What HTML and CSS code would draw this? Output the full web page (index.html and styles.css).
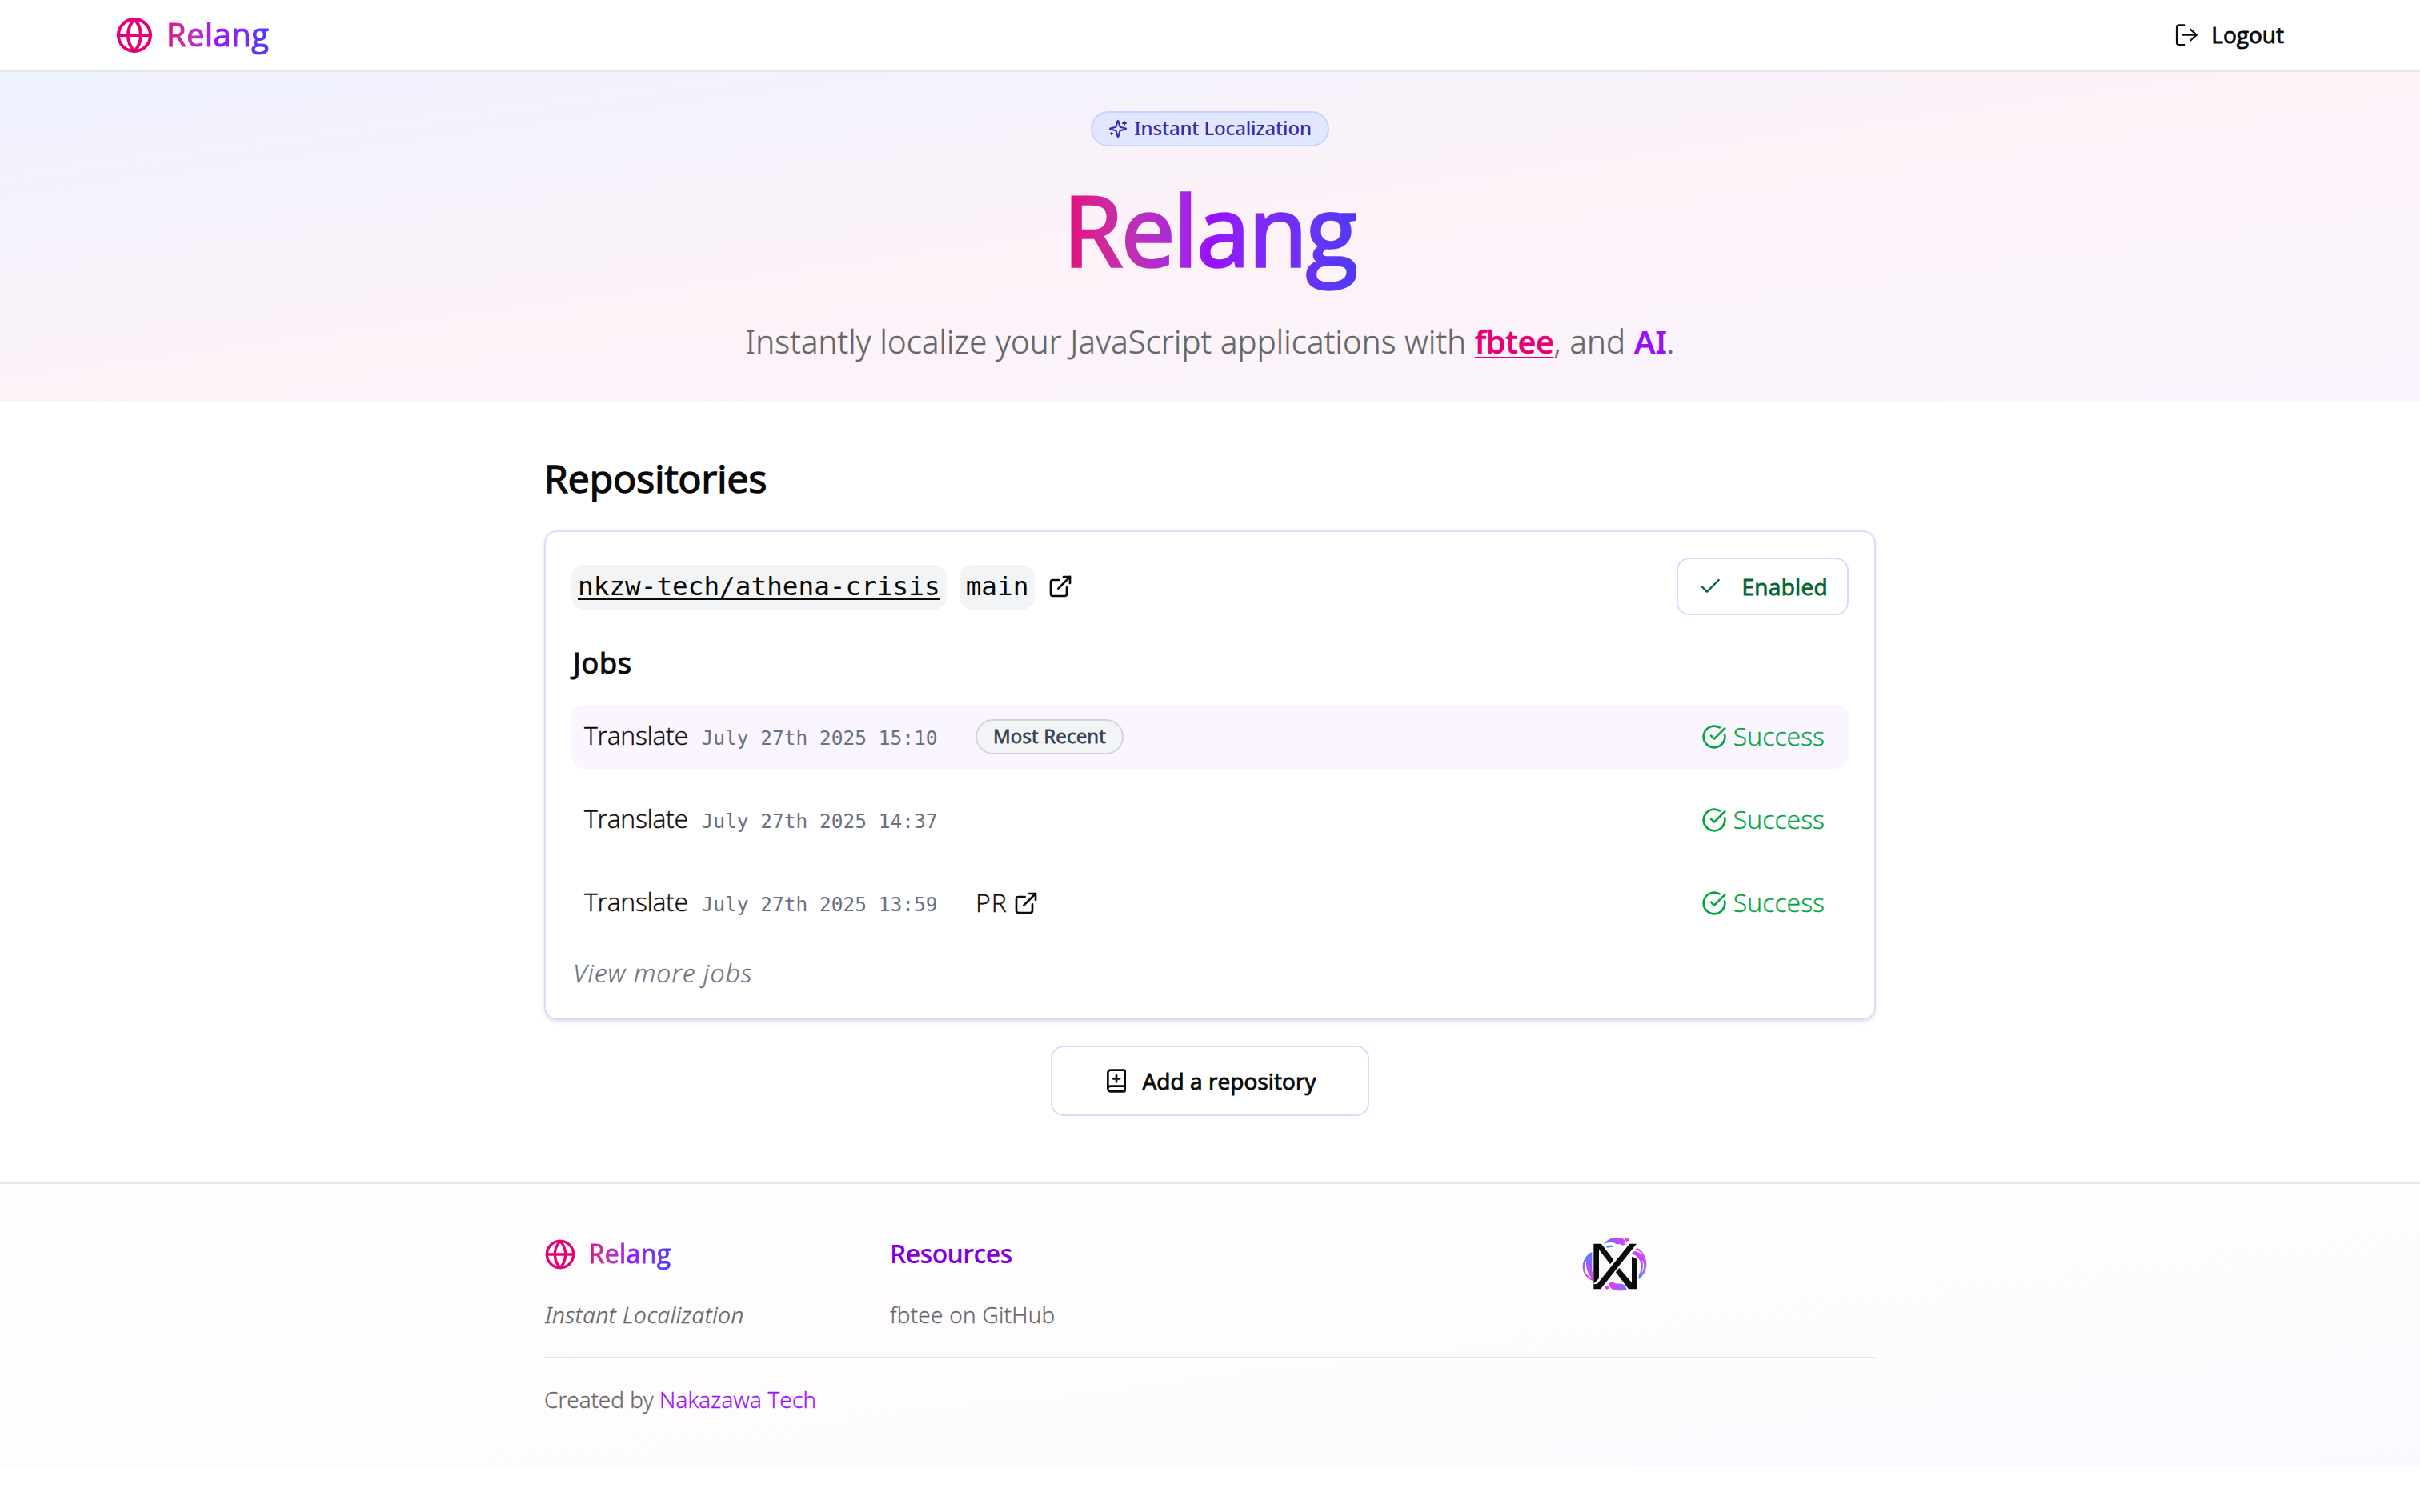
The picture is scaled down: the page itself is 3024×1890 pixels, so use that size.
FILE: index.html
```
<!DOCTYPE html>
<html lang="en">
<head>
<meta charset="utf-8">
<title>Relang</title>
<link rel="stylesheet" href="styles.css">
</head>
<body>
<svg class="defs" width="0" height="0" aria-hidden="true">
  <symbol id="globe" viewBox="0 0 24 24"><circle cx="12" cy="12" r="10"/><path d="M12 2a14.5 14.5 0 0 0 0 20 14.5 14.5 0 0 0 0-20"/><path d="M2 12h20"/></symbol>
  <symbol id="external" viewBox="0 0 24 24"><path d="M15 3h6v6"/><path d="M10 14 21 3"/><path d="M18 13v6a2 2 0 0 1-2 2H5a2 2 0 0 1-2-2V8a2 2 0 0 1 2-2h6"/></symbol>
  <symbol id="done" viewBox="0 0 24 24"><path d="M21.801 10A10 10 0 1 1 17 3.335"/><path d="m9 11 3 3L22 4"/></symbol>
</svg>

<header class="topbar">
  <a class="brand"><svg class="icon brand-icon"><use href="#globe"/></svg><span class="brand-name gradient-text">Relang</span></a>
  <a class="logout">
    <svg class="icon logout-icon" viewBox="114 88 88 88"><path d="M148 95h-20a8 8 0 0 0-8 8v58a8 8 0 0 0 8 8h20"/><path d="M142 132h52"/><path d="m171 111 23 21-23 21"/></svg>
    <span class="medium">Logout</span>
  </a>
</header>

<section class="hero">
  <div class="pill">
    <svg class="icon pill-icon" viewBox="0 0 24 24"><path d="M9.937 15.5A2 2 0 0 0 8.5 14.063l-6.135-1.582a.5.5 0 0 1 0-.962L8.5 9.936A2 2 0 0 0 9.937 8.5l1.582-6.135a.5.5 0 0 1 .963 0L14.063 8.5A2 2 0 0 0 15.5 9.937l6.135 1.581a.5.5 0 0 1 0 .964L15.5 14.063a2 2 0 0 0-1.437 1.437l-1.582 6.135a.5.5 0 0 1-.963 0z"/><path d="M20 3v4"/><path d="M22 5h-4"/><path d="M4 17v2"/><path d="M5 18H3"/></svg>
    <span>Instant Localization</span>
  </div>
  <h1 class="hero-title gradient-text">Relang</h1>
  <p class="tagline">Instantly localize your JavaScript applications with <a class="tag-link">fbtee</a>, and <span class="tag-ai">AI</span>.</p>
</section>

<main class="content">
  <h2 class="section-title medium">Repositories</h2>
  <article class="card">
    <div class="card-head">
      <code class="code linked">nkzw-tech/athena-crisis</code>
      <code class="code">main</code>
      <svg class="icon"><use href="#external"/></svg>
      <button class="enabled"><svg class="icon check" viewBox="0 0 24 24"><path d="M20 6 9 17l-5-5"/></svg><span class="medium">Enabled</span></button>
    </div>
    <h3 class="jobs-title medium">Jobs</h3>
    <ul class="jobs">
      <li class="job recent">
        <div class="job-info"><span class="job-name">Translate</span><time class="job-time">July 27th 2025 15:10</time></div>
        <span class="tag medium">Most Recent</span>
        <span class="status"><svg class="icon"><use href="#done"/></svg><span>Success</span></span>
      </li>
      <li class="job">
        <div class="job-info"><span class="job-name">Translate</span><time class="job-time">July 27th 2025 14:37</time></div>
        <span class="status"><svg class="icon"><use href="#done"/></svg><span>Success</span></span>
      </li>
      <li class="job">
        <div class="job-info"><span class="job-name">Translate</span><time class="job-time">July 27th 2025 13:59</time></div>
        <a class="pr"><span>PR</span><svg class="icon"><use href="#external"/></svg></a>
        <span class="status"><svg class="icon"><use href="#done"/></svg><span>Success</span></span>
      </li>
    </ul>
    <a class="more">View more jobs</a>
  </article>
  <button class="add">
    <svg class="icon" viewBox="0 0 24 24"><path d="M4 19.5v-15A2.5 2.5 0 0 1 6.5 2H19a1 1 0 0 1 1 1v18a1 1 0 0 1-1 1H6.5a1 1 0 0 1 0-5H20"/><path d="M12 7v6"/><path d="M9 10h6"/></svg>
    <span class="medium">Add a repository</span>
  </button>
</main>

<footer class="footer">
  <div class="footer-inner">
    <div class="footer-grid">
      <div class="footer-col">
        <a class="footer-brand"><svg class="icon footer-icon"><use href="#globe"/></svg><span class="footer-name gradient-text">Relang</span></a>
        <p class="motto">Instant Localization</p>
      </div>
      <div class="footer-col">
        <h4 class="footer-title">Resources</h4>
        <a class="footer-link">fbtee on GitHub</a>
      </div>
      <svg class="logo" viewBox="50 34 246 204">
        <defs>
          <linearGradient id="ga" x1="0" y1="0" x2="1" y2="0"><stop offset="0" stop-color="#4f86ff"/><stop offset=".55" stop-color="#a855f7"/><stop offset="1" stop-color="#d946ef"/></linearGradient>
          <linearGradient id="gb" x1="0" y1="0" x2="0" y2="1"><stop offset="0" stop-color="#4f86ff"/><stop offset=".5" stop-color="#a855f7"/><stop offset="1" stop-color="#d946ef"/></linearGradient>
          <linearGradient id="gc" x1="0" y1="0" x2="0" y2="1"><stop offset="0" stop-color="#d946ef"/><stop offset=".5" stop-color="#b455fa"/><stop offset="1" stop-color="#4f86ff"/></linearGradient>
          <linearGradient id="gd" x1="0" y1="0" x2="1" y2="0"><stop offset="0" stop-color="#e040f0"/><stop offset=".5" stop-color="#b455fa"/><stop offset="1" stop-color="#5f80ff"/></linearGradient>
        </defs>
        <path fill="url(#ga)" d="M130 62c14-19 40-30 64-24 10 2 16 7 18 13 1 8-3 15-10 15-7-1-9-6-14-5-6 2-12 0-16-4-13-4-28-2-42 5z"/>
        <path fill="#d946ef" d="M208 43c6-5 14-4 19-1-2 5-5 10-11 11-2-4-4-8-8-10z"/>
        <path fill="#5f80ff" d="M139 73c7-9 21-10 29-3-4 5-8 2-13 3-6 3-11 3-16 0z"/>
        <path fill="url(#gb)" fill-rule="evenodd" d="M87 91v72l22 27-6 12c-30-4-52-27-51-58 1-24 15-45 35-53zm-22 33c-13 26-6 50 20 66-13-19-22-38-20-66z"/>
        <path fill="url(#gc)" fill-rule="evenodd" d="M235 97c4-5 8-8 14-9 11 2 20 8 27 16-5-9-12-18-25-23l4-6c23 9 36 38 36 62 0 23-12 43-29 57v-15c12-26 13-47-2-65-7-8-15-13-25-17zm40 23c5 20 3 36-3 52 12-17 12-37 3-52z"/>
        <path fill="url(#gd)" d="M152 208c7-7 16-6 19 0 14 3 26-1 37 7l10 16c-20 8-43 6-58-3-7-5-9-13-8-20z"/>
        <path fill="#e040f0" d="M134 221c5-4 14-2 17 3-2 7-8 9-12 6-2-2-2-6-5-9z"/>
        <g fill="#0a0a0a" stroke="#fefcfe" stroke-width="5" paint-order="stroke">
          <path d="M93 60h29l46 61-13 16-42-55v108l-20 20z"/>
          <path d="m189 151 47 55v-98l21 11v111h-33l-48-63z"/>
          <path d="M228 60h26L119 230H93v-19h13z"/>
        </g>
      </svg>
    </div>
    <p class="credit">Created by <a class="credit-link">Nakazawa Tech</a></p>
  </div>
</footer>
</body>
</html>
```
FILE: styles.css
```
* { box-sizing: border-box; margin: 0; padding: 0; }
body {
  background: #fff;
  color: #0a0a0a;
  font-family: "Open Sans", "Liberation Sans", sans-serif;
  font-weight: 300;
  -webkit-text-stroke: 0.024em;
}
.defs { display: block; height: 0; }
.icon {
  display: block;
  flex: none;
  width: 32px;
  height: 32px;
  fill: none;
  stroke: currentColor;
  stroke-width: 2;
  stroke-linecap: round;
  stroke-linejoin: round;
}
.medium { font-weight: 400; -webkit-text-stroke: 0.032em; }
.gradient-text {
  font-weight: 400;
  -webkit-text-stroke: 0.028em transparent;
  color: transparent;
  background: linear-gradient(to right in oklab, #e60076, #9810fa, #4f39f6);
  -webkit-background-clip: text;
  background-clip: text;
}

.topbar {
  display: flex;
  align-items: center;
  justify-content: space-between;
  height: 90px;
  padding: 0 170px 0 144px;
  border-bottom: 2px solid #e5e5e5;
}
.brand { display: flex; align-items: center; gap: 16px; color: #e60076; }
.brand-icon { width: 48px; height: 48px; }
.brand-name { font-size: 40px; line-height: 56px; letter-spacing: 0.45px; padding-bottom: 2px; }
.logout { display: flex; align-items: center; gap: 16px; font-size: 28px; line-height: 40px; }
.logout span { padding-bottom: 2px; }
.logout-icon { width: 29.33px; height: 29.33px; stroke-width: 6.5; }

.hero {
  display: flex;
  flex-direction: column;
  align-items: center;
  height: 413px;
  padding-top: 49px;
  background: linear-gradient(to bottom right, #eef2ff, #fdf2f8, #faf5ff);
}
.pill {
  display: flex;
  align-items: center;
  justify-content: center;
  gap: 8px;
  width: 298px;
  height: 44px;
  border: 2px solid #c6d2ff;
  border-radius: 22px;
  background: #e0e7ff;
  color: #372aac;
  font: 500 24px/32px "Noto Sans", sans-serif;
  letter-spacing: -0.18px;
  -webkit-text-stroke: 0;
}
.pill span { padding-bottom: 2px; }
.pill-icon { width: 24px; height: 24px; }
.hero-title { margin-top: 34px; padding: 10px 0 28px; font-size: 120px; line-height: 120px; letter-spacing: -1.7px; }
.tagline {
  margin-top: 24px;
  color: #666;
  font: 300 40px/56px "Noto Sans", sans-serif;
  letter-spacing: 0.18px;
}
.tag-link {
  color: #e60076;
  font-family: "Open Sans", sans-serif;
  font-weight: 600;
  letter-spacing: -0.5px;
  -webkit-text-stroke: 0.01em;
  text-decoration: underline 2px;
  text-underline-offset: 4px;
}
.tag-ai { color: #9810fa; font-weight: 600; letter-spacing: -0.5px; -webkit-text-stroke: 0; }

.content { width: 1664px; height: 975px; margin: 0 auto; padding-top: 67px; }
.section-title { font-size: 48px; line-height: 56px; letter-spacing: 0.1px; }
.card {
  height: 612px;
  margin-top: 37px;
  padding: 32px;
  border: 2px solid #e9d4ff;
  border-radius: 16px;
  box-shadow: 0 2px 6px rgba(0, 0, 0, 0.1), 0 2px 4px -2px rgba(0, 0, 0, 0.1);
}
.card-head { display: flex; align-items: center; gap: 16px; height: 72px; }
.code {
  height: 56px;
  margin-top: 2px;
  padding: 0 8px;
  border-radius: 16px;
  background: #f3f4f6;
  font: 400 32.7px/54px "DejaVu Sans Mono", monospace;
  -webkit-text-stroke: 0;
}
.linked { text-decoration: underline 2px; text-underline-offset: 4px; }
.enabled {
  display: flex;
  align-items: center;
  gap: 23.5px;
  width: 215px;
  height: 72px;
  margin-left: auto;
  padding: 0 0 0 24px;
  border: 2px solid #e9d4ff;
  border-radius: 16px;
  background: #fff;
  color: #016630;
  font: 400 28px/40px "Open Sans", sans-serif;
  letter-spacing: 0.3px;
}
.enabled span, .add span { padding-bottom: 1px; }
.check { stroke-width: 1.8; }
.jobs-title { margin: 38px 0 0 2px; font-size: 36px; line-height: 44px; letter-spacing: 0.8px; }
.jobs { display: flex; flex-direction: column; gap: 24px; margin-top: 30px; list-style: none; }
.job {
  display: flex;
  align-items: center;
  height: 80px;
  padding: 0 30px 0 16px;
  border-radius: 16px;
  font-size: 32px;
  line-height: 40px;
}
.recent { background: #faf5ff; }
.job-info { display: flex; align-items: baseline; width: 489px; }
.job-name { width: 146.5px; letter-spacing: -0.3px; }
.job-time {
  color: #6a7282;
  font: 400 24.5px/40px "DejaVu Sans Mono", monospace;
  -webkit-text-stroke: 0;
}
.tag {
  width: 185px;
  height: 44px;
  border: 2px solid #d1d5dc;
  border-radius: 22px;
  background: #f3f4f6;
  color: #364153;
  font-size: 24px;
  line-height: 38px;
  letter-spacing: 0.2px;
  text-align: center;
}
.status { display: flex; align-items: center; gap: 7.5px; margin-left: auto; color: #00a63e; }
.status span, .pr span { padding-bottom: 2px; }
.pr { display: flex; align-items: center; gap: 6px; }
.pr span { width: 41px; letter-spacing: 1px; }
.more {
  display: block;
  margin: 27px 0 0 2px;
  color: #6a7282;
  font-size: 32px;
  line-height: 40px;
  font-style: italic;
  letter-spacing: 1.1px;
}
.add {
  display: flex;
  align-items: center;
  justify-content: center;
  gap: 16px;
  width: 398px;
  height: 88px;
  margin: 31px auto 0;
  border: 2px solid #e9d4ff;
  border-radius: 16px;
  background: #fff;
  color: #0a0a0a;
  font: 400 28px/40px "Open Sans", sans-serif;
  letter-spacing: 0.08px;
}
.card + .add { margin-top: 32px; }

.footer {
  height: 356px;
  padding-top: 68px;
  border-top: 2px solid #e5e5e5;
  background: linear-gradient(to bottom right, #fcfdff, #fffcfd, #f9faff);
}
.footer-inner { width: 1664px; margin: 0 auto; color: #666; font-size: 28px; line-height: 40px; }
.footer-grid {
  display: grid;
  grid-template-columns: 432px 864.5px auto;
  height: 150px;
  border-bottom: 2px solid #e5e5e5;
}
.footer-brand { display: flex; align-items: center; gap: 15.5px; height: 40px; color: #e60076; }
.footer-icon { width: 40px; height: 40px; }
.footer-name { font-size: 32px; line-height: 44px; letter-spacing: 0.4px; padding-bottom: 2px; }
.footer-title {
  height: 40px;
  color: #8200db;
  font-size: 32px;
  font-weight: 600;
  line-height: 38px;
  letter-spacing: -0.6px;
  -webkit-text-stroke: 0;
}
.motto { margin-top: 35px; padding-left: 1px; font-family: "Noto Sans", sans-serif; font-style: italic; letter-spacing: 0.5px; }
.footer-link { display: block; margin-top: 35px; letter-spacing: 0.3px; }
.logo { width: 82px; height: 68px; margin-top: -2px; }
.credit { margin-top: 31px; }
.credit-link { color: #9810fa; letter-spacing: 0.22px; }
```
